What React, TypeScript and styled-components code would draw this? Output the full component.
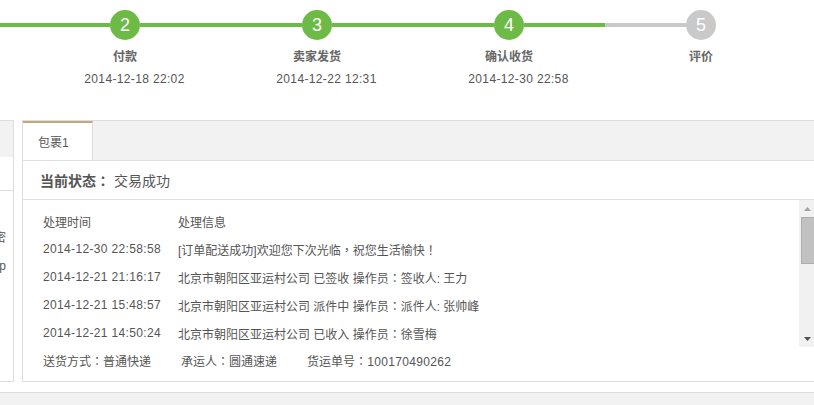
import React from "react";
import styled, { createGlobalStyle } from "styled-components";

const GREEN = "#6dbb46";
const GRAY = "#c9c9c9";
const BORDER = "#dedede";

const GlobalStyle = createGlobalStyle`
  html, body { margin: 0; padding: 0; background: #fff; overflow: hidden; }
  body { font-family: "Liberation Sans", "Noto Sans CJK SC", sans-serif; font-size: 12px; color: #555; }
`;

const Page = styled.div`
  width: 814px;
  height: 405px;
  overflow: hidden;
`;

const StepsRow = styled.div`
  display: flex;
  height: 120px;
  margin-left: -163px;
`;

const Step = styled.div`
  width: 192px;
  flex: none;
  display: flex;
  flex-direction: column;
  align-items: center;
  padding-top: 10px;
`;

const Track = styled.div`
  display: flex;
  align-items: center;
  width: 100%;
  height: 30px;
`;

const Line = styled.div<{ $color: string }>`
  flex: 1;
  height: 4px;
  background: ${(p) => p.$color};
`;

const Circle = styled.div<{ $color: string }>`
  width: 30px;
  height: 30px;
  border-radius: 50%;
  background: ${(p) => p.$color};
  color: #fff;
  font-size: 18px;
  line-height: 30px;
  text-align: center;
  flex: none;
`;

const StepLabel = styled.div`
  margin-top: 9px;
  line-height: 17px;
  font-size: 12px;
  font-weight: bold;
  color: #666;
`;

const StepDate = styled.div`
  margin-top: 5px;
  line-height: 17px;
  padding-left: 19px;
  color: #555;
  letter-spacing: 0.35px;
`;

const Panels = styled.div`
  display: flex;
  gap: 8px;
  margin-left: -200px;
`;

const SidePanel = styled.div`
  width: 214px;
  flex: none;
  border: 1px solid ${BORDER};
  box-sizing: border-box;
  display: flex;
  flex-direction: column;
`;

const SideHead = styled.div`
  height: 36px;
  background: #f2f2f2;
`;

const SideRow = styled.div`
  height: 33px;
  border-bottom: 1px solid ${BORDER};
`;

const SideBody = styled.div`
  padding-top: 38px;
  display: flex;
  flex-direction: column;
  gap: 10px;
  text-align: right;
  padding-right: 7px;
  line-height: 18px;
  overflow: hidden;
  white-space: nowrap;
`;

const MainPanel = styled.div`
  width: 795px;
  flex: none;
  border: 1px solid ${BORDER};
  box-sizing: border-box;
  display: flex;
  flex-direction: column;
`;

const TabStrip = styled.div`
  height: 39px;
  background: #f2f2f2;
  border-bottom: 1px solid ${BORDER};
  display: flex;
`;

const Tab = styled.div<{ $active?: boolean }>`
  width: 54px;
  box-sizing: content-box;
  height: 37px;
  background: ${(p) => (p.$active ? "#fff" : "transparent")};
  border-top: 2px solid ${(p) => (p.$active ? "#c6a67f" : "transparent")};
  border-right: 1px solid ${BORDER};
  padding-left: 15px;
  display: flex;
  align-items: center;
  color: #555;
  font-size: 12px;
`;

const StatusRow = styled.div`
  height: 38px;
  border-bottom: 1px solid ${BORDER};
  display: flex;
  align-items: center;
  padding-left: 17px;
  gap: 4px;
  font-size: 14px;
  color: #555;
`;

const StatusKey = styled.span`
  font-weight: bold;
`;

const LogArea = styled.div`
  display: flex;
  height: 147px;
`;

const LogScroll = styled.div`
  flex: 1;
  overflow: hidden;
  padding-top: 7px;
  padding-left: 20px;
`;

const LogRow = styled.div`
  display: flex;
  height: 28px;
  align-items: center;
  white-space: nowrap;
  color: #555;
`;

const TimeCell = styled.div<{ $num?: boolean }>`
  width: 135px;
  flex: none;
  letter-spacing: ${(p) => (p.$num ? "0.35px" : "0")};
`;

const InfoCell = styled.div`
  flex: 1;
`;

const Scrollbar = styled.div`
  width: 17px;
  flex: none;
  background: #f1f1f1;
  display: flex;
  flex-direction: column;
`;

const ScrollBtn = styled.div`
  height: 17px;
  display: flex;
  align-items: center;
  justify-content: center;
`;

const ScrollTrack = styled.div`
  flex: 1;
  padding: 0 1px 0 2px;
`;

const Thumb = styled.div`
  height: 47px;
  background: #c1c1c1;
  border: 1px solid #adadad;
  box-sizing: border-box;
`;

const Footer = styled.div`
  height: 34px;
  box-sizing: border-box;
  padding: 5px 0 0 20px;
  line-height: 18px;
  display: flex;
  gap: 30px;
  white-space: nowrap;
  color: #555;
`;

const Num = styled.span`
  letter-spacing: 0.33px;
`;

const Punct = styled.span`
  font-family: "Noto Sans CJK TC", "Noto Sans CJK SC", sans-serif;
`;

const NextSection = styled.div`
  margin-top: 10px;
  height: 30px;
  border-top: 1px solid ${BORDER};
  background: #f2f2f2;
`;

const steps = [
  { n: 1, label: "拍下商品", date: "2014-12-18 21:58", done: true },
  { n: 2, label: "付款", date: "2014-12-18 22:02", done: true },
  { n: 3, label: "卖家发货", date: "2014-12-22 12:31", done: true },
  { n: 4, label: "确认收货", date: "2014-12-30 22:58", done: true },
  { n: 5, label: "评价", date: "", done: false },
];

const logs = [
  { t: "2014-12-30 22:58:58", m: "[订单配送成功]欢迎您下次光临，祝您生活愉快！" },
  { t: "2014-12-21 21:16:17", m: "北京市朝阳区亚运村公司 已签收 操作员：签收人: 王力" },
  { t: "2014-12-21 15:48:57", m: "北京市朝阳区亚运村公司 派件中 操作员：派件人: 张帅峰" },
  { t: "2014-12-21 14:50:24", m: "北京市朝阳区亚运村公司 已收入 操作员：徐雪梅" },
  { t: "2014-12-21 09:12:40", m: "北京转运中心 已发出 下一站：北京市朝阳区亚运村公司" },
  { t: "2014-12-20 22:31:05", m: "北京转运中心 已收入" },
  { t: "2014-12-19 18:04:33", m: "杭州转运中心 已发出 下一站：北京转运中心" },
];

// Render fullwidth punctuation centred, as the reference's font does.
const Zh = ({ text }: { text: string }) => (
  <>
    {text.split(/([：，！])/).map((part, i) =>
      /^[：，！]$/.test(part) ? <Punct key={i}>{part}</Punct> : <React.Fragment key={i}>{part}</React.Fragment>
    )}
  </>
);

const ArrowUp = () => (
  <svg width="7" height="4" viewBox="0 0 7 4">
    <path d="M3.5 0 L7 4 L0 4 Z" fill="#a3a3a3" />
  </svg>
);

const ArrowDown = () => (
  <svg width="7" height="4" viewBox="0 0 7 4">
    <path d="M0 0 L7 0 L3.5 4 Z" fill="#505050" />
  </svg>
);

export default function App() {
  return (
    <Page>
      <GlobalStyle />
      <StepsRow>
        {steps.map((s, i) => {
          const c = s.done ? GREEN : GRAY;
          const last = i === steps.length - 1;
          return (
            <Step key={s.n}>
              <Track>
                <Line $color={c} />
                <Circle $color={c}>{s.n}</Circle>
                <Line $color={last ? "transparent" : c} />
              </Track>
              <StepLabel>{s.label}</StepLabel>
              {s.date && <StepDate>{s.date}</StepDate>}
            </Step>
          );
        })}
      </StepsRow>
      <Panels>
        <SidePanel>
          <SideHead />
          <SideRow />
          <SideBody>
            <div>请妥善保管账户密</div>
            <div>联系客服 400-800-800p</div>
          </SideBody>
        </SidePanel>
        <MainPanel>
          <TabStrip>
            <Tab $active>包裹1</Tab>
          </TabStrip>
          <StatusRow>
            <StatusKey>
              <Zh text="当前状态：" />
            </StatusKey>
            <span>交易成功</span>
          </StatusRow>
          <LogArea>
            <LogScroll>
              <LogRow>
                <TimeCell>处理时间</TimeCell>
                <InfoCell>处理信息</InfoCell>
              </LogRow>
              {logs.map((l) => (
                <LogRow key={l.t}>
                  <TimeCell $num>{l.t}</TimeCell>
                  <InfoCell>
                    <Zh text={l.m} />
                  </InfoCell>
                </LogRow>
              ))}
            </LogScroll>
            <Scrollbar>
              <ScrollBtn>
                <ArrowUp />
              </ScrollBtn>
              <ScrollTrack>
                <Thumb />
              </ScrollTrack>
              <ScrollBtn>
                <ArrowDown />
              </ScrollBtn>
            </Scrollbar>
          </LogArea>
          <Footer>
            <span>
              <Zh text="送货方式：普通快递" />
            </span>
            <span>
              <Zh text="承运人：圆通速递" />
            </span>
            <span>
              <Zh text="货运单号：" />
              <Num>100170490262</Num>
            </span>
          </Footer>
        </MainPanel>
      </Panels>
      <NextSection />
    </Page>
  );
}
